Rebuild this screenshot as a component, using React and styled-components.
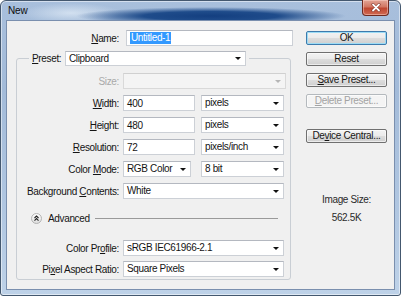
import React from "react";
import styled, { createGlobalStyle } from "styled-components";

const GlobalStyle = createGlobalStyle`
  html, body {
    margin: 0;
    padding: 0;
    background: #ffffff;
  }
  body {
    font-family: "Liberation Sans", Arial, sans-serif;
    font-size: 10px;
    letter-spacing: -0.35px;
    color: #141414;
  }
`;

const Window = styled.div`
  width: 401px;
  height: 296px;
  box-sizing: border-box;
  border: 1px solid #44586f;
  border-radius: 6px 6px 3px 3px;
  padding: 0 5px 5px;
  display: flex;
  flex-direction: column;
  background: linear-gradient(180deg, #a8bfdc 0%, #a3bbd9 30%, #b2c8e2 75%, #bed2e8 100%);
  box-shadow: inset 0 0 0 1px rgba(255, 255, 255, 0.5);
`;

const TitleBar = styled.div`
  height: 19px;
  margin: 0 -5px;
  padding: 0 11px 0 6px;
  display: flex;
  justify-content: space-between;
  align-items: flex-start;
  background:
    radial-gradient(ellipse 135px 9px at 210px 15px, #143f80 0%, #1f4c8b 50%, rgba(80, 120, 175, 0) 100%),
    radial-gradient(ellipse 50px 10px at 70px 12px, rgba(228, 238, 248, 0.7), rgba(228, 238, 248, 0));
`;

const Title = styled.span`
  margin: 4px 0 0 1px;
  font-size: 10px;
  letter-spacing: -0.2px;
  color: #0d0d0d;
`;

const CloseButton = styled.div`
  width: 27px;
  height: 16px;
  margin-top: -1px;
  box-sizing: border-box;
  border: 1px solid #6e2a20;
  border-top: none;
  border-radius: 0 0 4px 4px;
  background: linear-gradient(180deg, #e3a597 0%, #d27763 45%, #bf4630 55%, #d06a52 100%);
  box-shadow: inset 0 0 0 1px rgba(255, 220, 210, 0.45);
  display: flex;
  align-items: center;
  justify-content: center;
`;

const Client = styled.div`
  flex: 1;
  display: flex;
  align-items: flex-start;
  background: #f0f0f0;
  border: 1px solid #7a8fae;
`;

const LeftColumn = styled.div`
  width: 277px;
  margin: 9px 0 0 9px;
  display: flex;
  flex-direction: column;
`;

const NameRow = styled.div`
  display: flex;
  align-items: center;
  gap: 7px;
`;

const Label = styled.span`
  width: ${(p) => p.$width || 102}px;
  text-align: right;
  white-space: nowrap;
  color: ${(p) => (p.$disabled ? "#a9a9a9" : "#141414")};
`;

const Key = styled.u`
  text-decoration-thickness: 1px;
  text-underline-offset: 1px;
`;

const TextBox = styled.div`
  width: ${(p) => p.$width}px;
  height: 16px;
  box-sizing: border-box;
  border: 1px solid #ccd0d6;
  border-top-color: #b4b8c0;
  background: #ffffff;
  padding-left: 3px;
  display: flex;
  align-items: center;
  white-space: nowrap;
`;

const Selection = styled.span`
  background: #3399ff;
  color: #ffffff;
  line-height: 12px;
  padding: 0 1px;
`;

const Combo = styled.div`
  width: ${(p) => p.$width}px;
  height: ${(p) => p.$height || 16}px;
  box-sizing: border-box;
  border: 1px solid ${(p) => (p.$disabled ? "#d9d9d9" : "#ccd0d6")};
  border-top-color: ${(p) => (p.$disabled ? "#d0d0d0" : "#b4b8c0")};
  background: ${(p) => (p.$disabled ? "#f4f4f4" : "#ffffff")};
  padding: 0 3px 0 3px;
  display: flex;
  align-items: center;
  justify-content: space-between;
  white-space: nowrap;
`;

const Arrow = styled.span`
  width: 0;
  height: 0;
  margin-right: 1px;
  border-left: 3px solid transparent;
  border-right: 3px solid transparent;
  border-top: 3px solid ${(p) => (p.$disabled ? "#b5b5b5" : "#111111")};
`;

const Group = styled.fieldset`
  width: 275px;
  margin: 5px 0 0 0;
  padding: 0 6px 2px 0;
  box-sizing: border-box;
  border: 1px solid #c9ced4;
  border-radius: 3px;
  min-width: 0;
`;

const Legend = styled.legend`
  margin-left: 12px;
  padding: 0 3px;
  height: 15px;
  display: flex;
  align-items: center;
  gap: 4px;
`;

const FormGrid = styled.div`
  display: grid;
  grid-template-columns: 102px 161px;
  grid-auto-rows: 16px;
  column-gap: 4px;
  row-gap: ${(p) => p.$gap}px;
  margin-top: ${(p) => p.$top}px;
  align-items: center;
`;

const Pair = styled.div`
  display: flex;
  justify-content: space-between;
`;

const AdvancedRow = styled.div`
  margin: 14px 6px 0 14px;
  height: 11px;
  display: flex;
  align-items: center;
  gap: 6px;
`;

const Rule = styled.div`
  flex: 1;
  height: 1px;
  margin-left: -1px;
  background: #9a9a9a;
`;

const RightColumn = styled.div`
  width: 81px;
  margin: 10px 0 0 13px;
  display: flex;
  flex-direction: column;
  gap: 7px;
`;

const Button = styled.div`
  height: 14px;
  box-sizing: border-box;
  margin-top: ${(p) => p.$top || 0}px;
  border: 1px solid ${(p) => (p.$default ? "#3d7bad" : p.$disabled ? "#b4b9bd" : "#707070")};
  border-radius: 2px;
  background: ${(p) =>
    p.$disabled
      ? "#f4f4f4"
      : "linear-gradient(180deg, #f3f3f3 0%, #ebebeb 50%, #dddddd 51%, #cfcfcf 100%)"};
  box-shadow: ${(p) => (p.$default ? "inset 0 0 0 1px #9ddcf5" : "inset 0 0 0 1px rgba(255,255,255,0.6)")};
  color: ${(p) => (p.$disabled ? "#a3a3a3" : "#161616")};
  display: flex;
  align-items: center;
  justify-content: center;
  white-space: nowrap;
  line-height: 12px;
`;

const SizeInfo = styled.div`
  margin-top: 44px;
  display: flex;
  flex-direction: column;
  align-items: center;
  gap: 6px;
  line-height: 12px;
  color: #2a2a2a;
`;

const TextValue = styled.span`
  line-height: 12px;
`;

function Select({ width, height, disabled, children }) {
  return (
    <Combo $width={width} $height={height} $disabled={disabled}>
      <TextValue>{children}</TextValue>
      <Arrow $disabled={disabled} />
    </Combo>
  );
}

function AdvancedIcon() {
  return (
    <svg width="11" height="11" viewBox="0 0 11 11">
      <defs>
        <linearGradient id="adv" x1="0" y1="0" x2="0" y2="1">
          <stop offset="0" stopColor="#ffffff" />
          <stop offset="1" stopColor="#dcdcdc" />
        </linearGradient>
      </defs>
      <circle cx="5.5" cy="5.5" r="5" fill="url(#adv)" stroke="#b3b3b3" />
      <path d="M3.5 5 L5.5 3 L7.5 5 M3.5 7.6 L5.5 5.6 L7.5 7.6" fill="none" stroke="#222" strokeWidth="1.1" />
    </svg>
  );
}

export default function App() {
  return (
    <>
      <GlobalStyle />
      <Window>
        <TitleBar>
          <Title>New</Title>
          <CloseButton>
            <svg width="10" height="9" viewBox="0 0 10 9">
              <path d="M2 1.5 L8 7.5 M8 1.5 L2 7.5" stroke="#7a2e22" strokeWidth="3" strokeLinecap="round" />
              <path d="M2 1.5 L8 7.5 M8 1.5 L2 7.5" stroke="#ffffff" strokeWidth="1.8" strokeLinecap="round" />
            </svg>
          </CloseButton>
        </TitleBar>
        <Client>
          <LeftColumn>
            <NameRow>
              <Label $width={103}>
                <Key>N</Key>ame:
              </Label>
              <TextBox $width={167}>
                <Selection>Untitled-1</Selection>
              </TextBox>
            </NameRow>

            <Group>
              <Legend>
                <Label $width={29}>
                  <Key>P</Key>reset:
                </Label>
                <Select width={181} height={15}>Clipboard</Select>
              </Legend>

              <FormGrid $gap={6} $top={7}>
                <Label $disabled>Size:</Label>
                <Select width={163} disabled />

                <Label>
                  <Key>W</Key>idth:
                </Label>
                <Pair>
                  <TextBox $width={72}>400</TextBox>
                  <Select width={83}>pixels</Select>
                </Pair>

                <Label>
                  <Key>H</Key>eight:
                </Label>
                <Pair>
                  <TextBox $width={72}>480</TextBox>
                  <Select width={83}>pixels</Select>
                </Pair>

                <Label>
                  <Key>R</Key>esolution:
                </Label>
                <Pair>
                  <TextBox $width={72}>72</TextBox>
                  <Select width={83}>pixels/inch</Select>
                </Pair>

                <Label>
                  Color <Key>M</Key>ode:
                </Label>
                <Pair>
                  <Select width={68}>RGB Color</Select>
                  <Select width={83}>8 bit</Select>
                </Pair>

                <Label>
                  Background <Key>C</Key>ontents:
                </Label>
                <Select width={161}>White</Select>
              </FormGrid>

              <AdvancedRow>
                <AdvancedIcon />
                <span>Advanced</span>
                <Rule />
              </AdvancedRow>

              <FormGrid $gap={5} $top={16}>
                <Label>
                  Color Pr<Key>o</Key>file:
                </Label>
                <Select width={161}>sRGB IEC61966-2.1</Select>

                <Label>
                  Pi<Key>x</Key>el Aspect Ratio:
                </Label>
                <Select width={161}>Square Pixels</Select>
              </FormGrid>
            </Group>
          </LeftColumn>

          <RightColumn>
            <Button $default>OK</Button>
            <Button>Reset</Button>
            <Button>
              <Key>S</Key>ave Preset...
            </Button>
            <Button $disabled>
              <Key>D</Key>elete Preset...
            </Button>
            <Button $top={14}>
              De<Key>v</Key>ice Central...
            </Button>
            <SizeInfo>
              <span>Image Size:</span>
              <span>562.5K</span>
            </SizeInfo>
          </RightColumn>
        </Client>
      </Window>
    </>
  );
}
